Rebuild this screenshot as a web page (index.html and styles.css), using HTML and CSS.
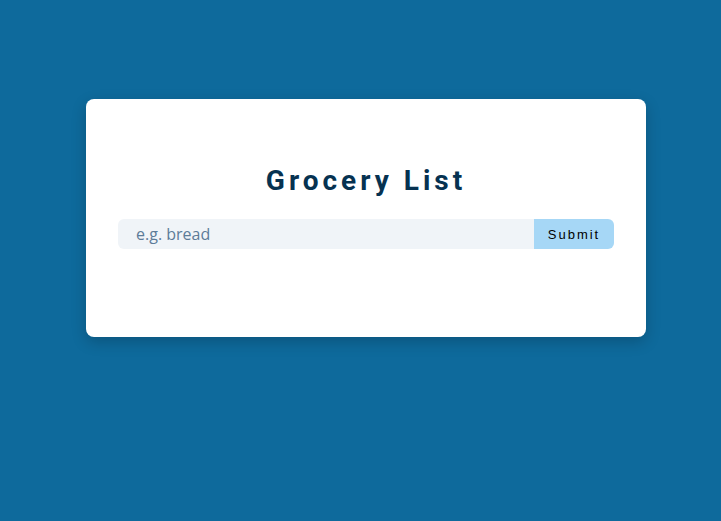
FILE: index.html
```html
<!DOCTYPE html>
<html lang="en">
<head>
<meta charset="utf-8">
<title>Grocery List</title>
<link rel="stylesheet" href="styles.css">
</head>
<body>
<section class="card">
  <form class="grocery-form">
    <h3 class="title">Grocery List</h3>
    <div class="form-control">
      <input type="text" class="grocery-input" placeholder="e.g. bread">
      <button type="submit" class="submit-btn">Submit</button>
    </div>
  </form>
</section>
</body>
</html>
```
FILE: styles.css
```css
* { box-sizing: border-box; }
html, body { margin: 0; padding: 0; }
body {
  background: #0e6a9c;
  min-height: 521px;
  padding-top: 99px;
  font-family: "Open Sans", "Liberation Sans", sans-serif;
}
.card {
  width: 560px;
  margin: 0 0 0 86px;
  background: #ffffff;
  border-radius: 8px;
  box-shadow: 0 5px 15px rgba(0, 0, 0, 0.2);
  padding: 64px 32px 88px;
}
.grocery-form { margin: 0; }
.title {
  margin: 0 0 21px;
  text-align: center;
  font-family: Roboto, "Liberation Sans", sans-serif;
  font-weight: 700;
  font-size: 28px;
  line-height: 35px;
  letter-spacing: 4px;
  color: #063251;
}
.form-control {
  display: flex;
  height: 30px;
}
.grocery-input {
  flex: 1 1 auto;
  min-width: 0;
  border: none;
  outline: none;
  background: #f0f4f8;
  border-radius: 6px 0 0 6px;
  padding: 0 0 0 18px;
  font-family: "Open Sans", sans-serif;
  font-size: 16px;
  color: #102a42;
}
.grocery-input::placeholder { color: #5d7c98; opacity: 1; }
.submit-btn {
  flex: 0 0 80px;
  border: none;
  background: #a6d7f6;
  border-radius: 0 6px 6px 0;
  font-family: "Liberation Sans", Arial, sans-serif;
  font-size: 13px;
  letter-spacing: 2px;
  color: #000000;
  padding: 0;
  cursor: pointer;
}
```
